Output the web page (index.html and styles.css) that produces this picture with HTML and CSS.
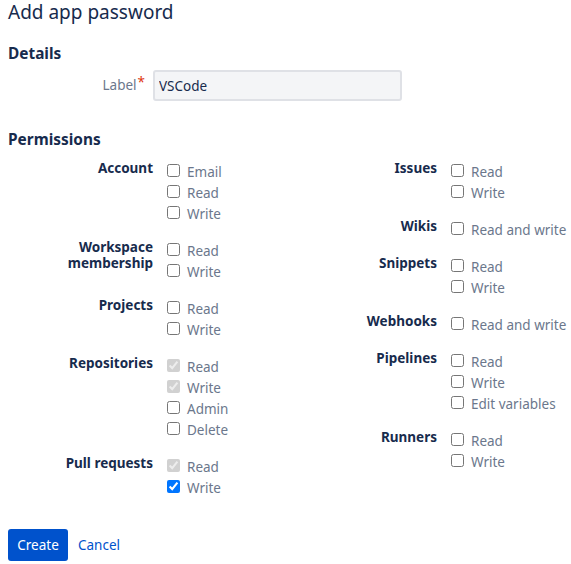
FILE: index.html
```html
<!DOCTYPE html>
<html lang="en">
<head>
<meta charset="utf-8">
<title>Add app password</title>
<link rel="stylesheet" href="styles.css">
</head>
<body>
<div class="page">
  <h1 class="title">Add app password</h1>
  <h2 class="section">Details</h2>
  <div class="field">
    <label class="field-label" for="label">Label<span class="req">*</span></label>
    <input class="text-input" id="label" type="text" value="VSCode">
  </div>
  <h2 class="section perms-head">Permissions</h2>
  <div class="perms">
    <div class="col">
      <div class="group">
        <div class="group-label">Account</div>
        <div class="opts">
          <label class="opt"><input type="checkbox"><span>Email</span></label>
          <label class="opt"><input type="checkbox"><span>Read</span></label>
          <label class="opt"><input type="checkbox"><span>Write</span></label>
        </div>
      </div>
      <div class="group">
        <div class="group-label">Workspace membership</div>
        <div class="opts">
          <label class="opt"><input type="checkbox"><span>Read</span></label>
          <label class="opt"><input type="checkbox"><span>Write</span></label>
        </div>
      </div>
      <div class="group">
        <div class="group-label">Projects</div>
        <div class="opts">
          <label class="opt"><input type="checkbox"><span>Read</span></label>
          <label class="opt"><input type="checkbox"><span>Write</span></label>
        </div>
      </div>
      <div class="group">
        <div class="group-label">Repositories</div>
        <div class="opts">
          <label class="opt"><input type="checkbox" checked disabled><span>Read</span></label>
          <label class="opt"><input type="checkbox" checked disabled><span>Write</span></label>
          <label class="opt"><input type="checkbox"><span>Admin</span></label>
          <label class="opt"><input type="checkbox"><span>Delete</span></label>
        </div>
      </div>
      <div class="group">
        <div class="group-label">Pull requests</div>
        <div class="opts">
          <label class="opt"><input type="checkbox" checked disabled><span>Read</span></label>
          <label class="opt"><input type="checkbox" checked><span>Write</span></label>
        </div>
      </div>
    </div>
    <div class="col">
      <div class="group">
        <div class="group-label">Issues</div>
        <div class="opts">
          <label class="opt"><input type="checkbox"><span>Read</span></label>
          <label class="opt"><input type="checkbox"><span>Write</span></label>
        </div>
      </div>
      <div class="group">
        <div class="group-label">Wikis</div>
        <div class="opts">
          <label class="opt"><input type="checkbox"><span>Read and write</span></label>
        </div>
      </div>
      <div class="group">
        <div class="group-label">Snippets</div>
        <div class="opts">
          <label class="opt"><input type="checkbox"><span>Read</span></label>
          <label class="opt"><input type="checkbox"><span>Write</span></label>
        </div>
      </div>
      <div class="group">
        <div class="group-label">Webhooks</div>
        <div class="opts">
          <label class="opt"><input type="checkbox"><span>Read and write</span></label>
        </div>
      </div>
      <div class="group">
        <div class="group-label">Pipelines</div>
        <div class="opts">
          <label class="opt"><input type="checkbox"><span>Read</span></label>
          <label class="opt"><input type="checkbox"><span>Write</span></label>
          <label class="opt"><input type="checkbox"><span>Edit variables</span></label>
        </div>
      </div>
      <div class="group">
        <div class="group-label">Runners</div>
        <div class="opts">
          <label class="opt"><input type="checkbox"><span>Read</span></label>
          <label class="opt"><input type="checkbox"><span>Write</span></label>
        </div>
      </div>
    </div>
  </div>
  <div class="actions">
    <button class="btn-primary" type="button">Create</button>
    <a class="link" href="#">Cancel</a>
  </div>
</div>
</body>
</html>
```
FILE: styles.css
```css
html, body {
  margin: 0;
  padding: 0;
  background: #fff;
}
body {
  font-family: "Noto Sans", "Open Sans", sans-serif;
  font-size: 13.5px;
  color: #172b4d;
}
.page {
  padding: 0 8px;
}
.title {
  margin: 0;
  font-size: 19px;
  line-height: 24px;
  font-weight: 400;
  color: #172b4d;
}
.section {
  margin: 20px 0 0;
  font-size: 15.4px;
  line-height: 20px;
  font-weight: 700;
  color: #172b4d;
}
.perms-head {
  margin-top: 29px;
}
.field {
  display: flex;
  align-items: center;
  gap: 8px;
  margin-top: 6px;
}
.field-label {
  width: 137px;
  text-align: right;
  color: #6b778c;
  line-height: 20px;
  margin-top: -2px;
}
.req {
  color: #de350b;
  position: relative;
  top: -3px;
  margin-left: 1px;
}
.text-input {
  width: 249px;
  height: 31px;
  box-sizing: border-box;
  border: 2px solid #dfe1e6;
  border-radius: 3px;
  background: #f4f5f7;
  font-family: inherit;
  font-size: 13.5px;
  color: #172b4d;
  padding: 0 4px;
  outline: none;
}
.perms {
  display: grid;
  grid-template-columns: 284px 1fr;
  margin-top: 10px;
}
.col {
  display: flex;
  flex-direction: column;
  gap: 16px;
}
.group {
  display: flex;
  gap: 10px;
}
.group-label {
  width: 145px;
  flex: none;
  text-align: right;
  font-weight: 700;
  line-height: 16px;
  color: #172b4d;
}
.opts {
  display: flex;
  flex-direction: column;
  white-space: nowrap;
}
.opt {
  display: flex;
  align-items: center;
  height: 21px;
  color: #6b778c;
  gap: 4px;
}
.opt span {
  padding-top: 3px;
}
.opt input {
  margin: 0 3px 0 4px;
  width: 13px;
  height: 13px;
}
.actions {
  display: flex;
  align-items: center;
  gap: 10px;
  margin-top: 32px;
}
.btn-primary {
  height: 32px;
  width: 60px;
  border: none;
  border-radius: 3px;
  background: #0052cc;
  color: #fff;
  font-family: inherit;
  font-size: 13.5px;
  padding: 0;
}
.link {
  color: #0052cc;
  text-decoration: none;
}
```
